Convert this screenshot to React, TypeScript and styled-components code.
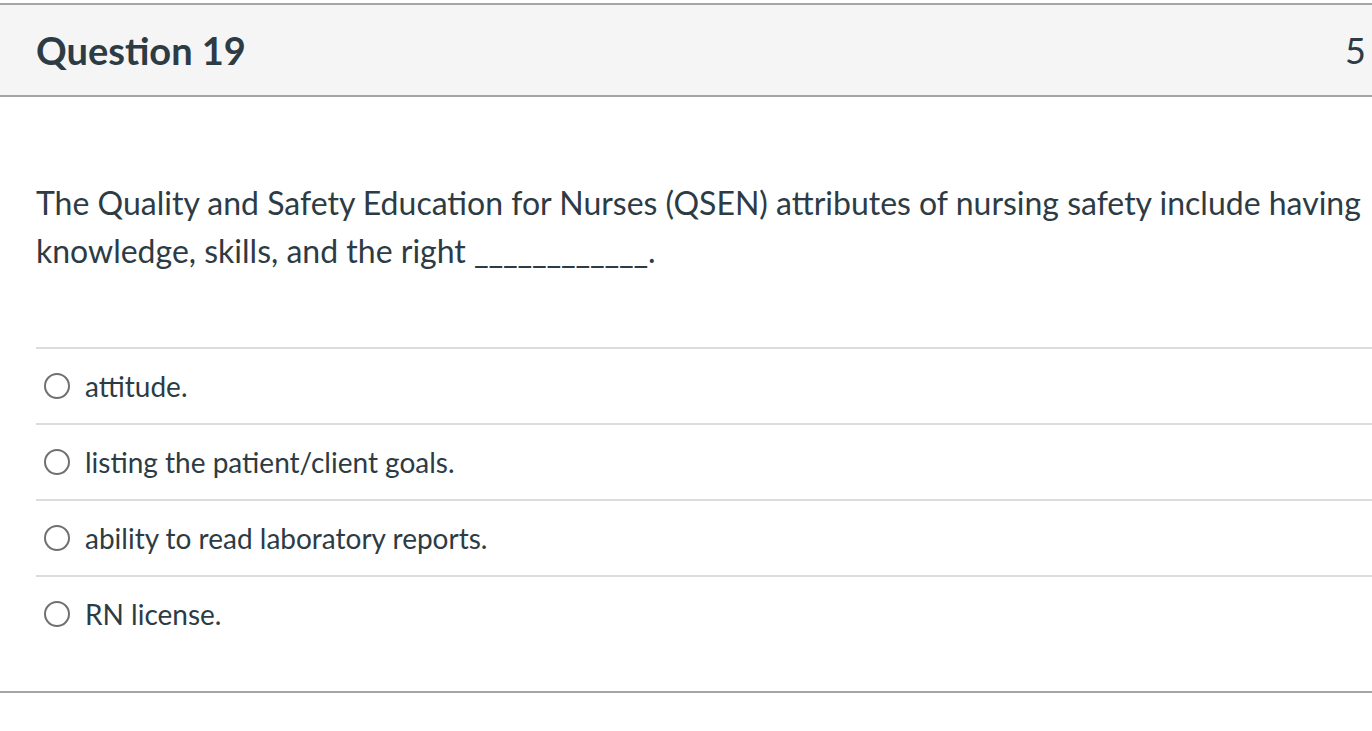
import React from "react";
import styled, { createGlobalStyle } from "styled-components";

const GlobalStyle = createGlobalStyle`
  html, body {
    margin: 0;
    padding: 0;
    background: #fff;
    overflow: hidden;
  }
  body {
    font-family: Lato, "Open Sans", sans-serif;
    color: #2d3b45;
  }
`;

const answers = [
  "attitude.",
  "listing the patient/client goals.",
  "ability to read laboratory reports.",
  "RN license.",
];

const App: React.FC = () => {
  return (
    <>
      <GlobalStyle />
      <Page>
        <QuestionBox>
          <Header>
            <Title>Question 19</Title>
            <Points>5</Points>
          </Header>
          <Body>
            <QuestionText>
              The Quality and Safety Education for Nurses (QSEN) attributes of
              nursing safety include having knowledge, skills, and the right{" "}
              <Blank>____________.</Blank>
            </QuestionText>
            <AnswerList>
              {answers.map((a) => (
                <Answer key={a}>
                  <Radio />
                  <AnswerLabel>{a}</AnswerLabel>
                </Answer>
              ))}
            </AnswerList>
          </Body>
        </QuestionBox>
      </Page>
    </>
  );
};

export default App;

const Page = styled.div`
  width: 1372px;
  height: 731px;
  padding-top: 3px;
  box-sizing: border-box;
  overflow: hidden;
`;

const QuestionBox = styled.div`
  width: 1392px;
  border-top: 2px solid #a5a5a5;
  border-bottom: 2px solid #a5a5a5;
`;

const Header = styled.div`
  display: flex;
  justify-content: space-between;
  align-items: center;
  height: 90px;
  background: #f5f5f5;
  border-bottom: 2px solid #a5a5a5;
  padding: 0 26px 0 36px;
`;

const Title = styled.h2`
  margin: 0;
  font-size: 38px;
  font-weight: 700;
  color: #2d3b45;
`;

const Points = styled.span`
  font-size: 36px;
  color: #2d3b45;
`;

const Body = styled.div`
  padding: 82px 0 40px 36px;
`;

const QuestionText = styled.div`
  font-size: 32px;
  line-height: 48px;
  width: 1340px;
`;

const Blank = styled.span`
  white-space: nowrap;
  letter-spacing: -0.2px;
`;

const AnswerList = styled.div`
  margin-top: 72px;
`;

const Answer = styled.div`
  display: flex;
  align-items: center;
  gap: 15px;
  height: 74px;
  padding-left: 8px;
  border-top: 2px solid #dcdcdc;
`;

const Radio = styled.span`
  width: 22px;
  height: 22px;
  border: 2px solid #707070;
  border-radius: 50%;
  background: #fff;
  flex-shrink: 0;
`;

const AnswerLabel = styled.span`
  font-size: 28px;
`;
